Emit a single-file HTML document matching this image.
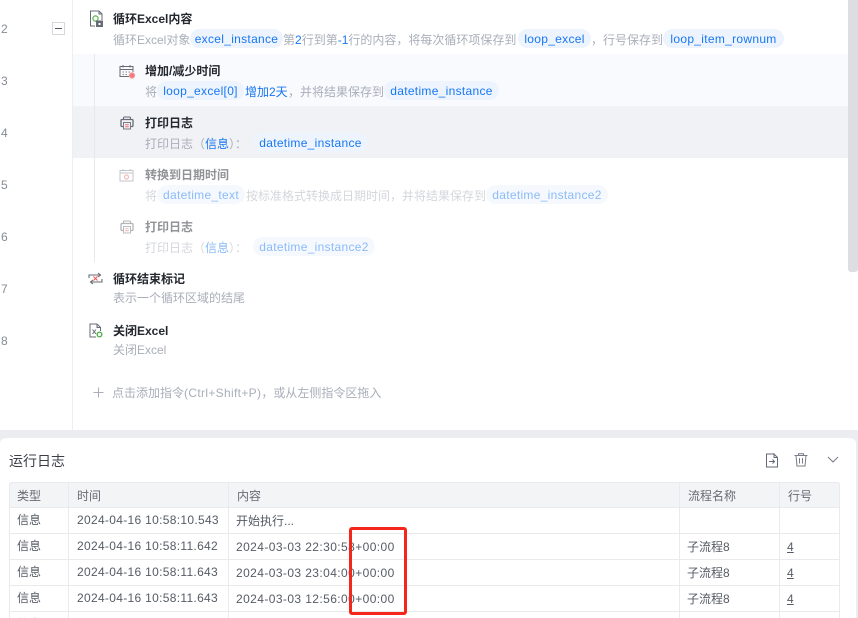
<!DOCTYPE html>
<html lang="zh-CN"><head><meta charset="utf-8">
<style>
html,body{margin:0;padding:0;width:858px;height:618px;overflow:hidden;background:#fff}
body{position:relative;font-family:"Liberation Sans","Noto Sans CJK SC",sans-serif;font-size:12px}
.a,.t,.d,.p,.n,.c{position:absolute;white-space:nowrap}
.a{display:block}
.t{font-weight:bold;color:#23272e;line-height:22px;height:20px}
.d{color:#a9aeb9;line-height:22px;height:20px}
.p{background:#edf4fe;color:#1877f2;border-radius:10px;height:19px;line-height:21px;text-align:center;letter-spacing:.3px}
.b{color:#1877f2}
.n{left:1px;color:#858b96;line-height:16px}
.c{color:#565b64;line-height:20px;height:20px}
.h{color:#666b75}
.tm{letter-spacing:.31px}
.ct{letter-spacing:.41px}
.v{position:absolute;width:1px;top:483px;height:135px;background:#e8eaee}
.r{position:absolute;left:9px;width:830px;height:1px;background:#e8eaee}
.off{opacity:.5}
svg{position:absolute;overflow:visible}
</style></head><body>

<div class="a" style="left:72px;top:0;width:1px;height:430px;background:#eceef1"></div>
<div class="a" style="left:73px;top:54px;width:775px;height:52px;background:#f8fafe"></div>
<div class="a" style="left:73px;top:106px;width:775px;height:52px;background:#f0f2f6"></div>
<div class="a" style="left:94px;top:54px;width:1px;height:208px;background:#e6e8ec"></div>
<div class="a" style="left:848px;top:0;width:10px;height:272px;background:#dcdee2;border-radius:0 0 3px 3px"></div>

<span class="n" style="top:21px">2</span>
<span class="n" style="top:73px">3</span>
<span class="n" style="top:125px">4</span>
<span class="n" style="top:177px">5</span>
<span class="n" style="top:229px">6</span>
<span class="n" style="top:281px">7</span>
<span class="n" style="top:333px">8</span>

<div class="a" style="left:52px;top:22px;width:11px;height:11px;border:1px solid #d6d8dc"></div>
<div class="a" style="left:55px;top:28px;width:7px;height:1px;background:#555a63"></div>

<!-- row 2 -->
<svg style="left:89px;top:10px" width="16" height="18" viewBox="0 0 16 18" fill="none"><path d="M10 1H1.5V16H6M10 1l3 3V10" stroke="#666b75"/><path d="M10 1V4H13" stroke="#666b75"/><circle cx="6.5" cy="8.5" r="2.6" stroke="#55b04c" stroke-width="1.2"/><rect x="7" y="10.5" width="7" height="6.5" fill="#666b75"/><rect x="9.5" y="13" width="2" height="2" fill="#fff"/></svg>
<span class="t" style="left:113px;top:8px">循环Excel内容</span>
<span class="d" style="left:113px;top:29px">循环Excel对象</span>
<span class="p" style="left:190px;top:29px;width:93px">excel_instance</span>
<span class="d" style="left:283px;top:29px">第<span class="b">2</span>行到第<span class="b">-1</span>行的内容，将每次循环项保存到</span>
<span class="p" style="left:518px;top:29px;width:73px">loop_excel</span>
<span class="d" style="left:591px;top:29px">，行号保存到</span>
<span class="p" style="left:663px;top:29px;width:121px">loop_item_rownum</span>

<!-- row 3 -->
<svg style="left:119px;top:64px" width="16" height="15" viewBox="0 0 16 15" fill="none"><path d="M10 12.5H1V2.5H14V8" stroke="#666b75"/><path d="M1 5.5H14M4 1V3.5M11 1V3.5" stroke="#666b75"/><path d="M3.5 8H5M6.5 8H8M9.5 8H11M3.5 10.5H5M6.5 10.5H8" stroke="#8a8f98"/><circle cx="13" cy="11.5" r="2.7" fill="#f27c7c" stroke="#f2a0a0"/></svg>
<span class="t" style="left:145px;top:60px">增加/减少时间</span>
<span class="d" style="left:145px;top:81px">将</span>
<span class="p" style="left:157px;top:81px;width:87px">loop_excel[0]</span>
<span class="d" style="left:245px;top:81px;color:#1877f2">增加2天</span>
<span class="d" style="left:288px;top:81px">，并将结果保存到</span>
<span class="p" style="left:384px;top:81px;width:115px">datetime_instance</span>

<!-- row 4 -->
<svg style="left:120px;top:116px" width="14" height="14" viewBox="0 0 14 14" fill="none"><path d="M3.5 3.5V2Q3.5 1 4.5 1H9.5Q10.5 1 10.5 2V3.5" stroke="#666b75" stroke-width="1.1"/><path d="M3 10.5H2Q1 10.5 1 9.5V4.5Q1 3.5 2 3.5H12Q13 3.5 13 4.5V9.5Q13 10.5 12 10.5H11" stroke="#666b75" stroke-width="1.3"/><rect x="3.5" y="6.5" width="7" height="6.5" stroke="#777c86" fill="#f0f2f6"/><path d="M5.2 8.7H8.8M5.2 10.7H8.8" stroke="#ec6a6a"/></svg>
<span class="t" style="left:145px;top:112px">打印日志</span>
<span class="d" style="left:145px;top:133px">打印日志（<span class="b">信息</span>）：</span>
<span class="p" style="left:253px;top:133px;width:115px">datetime_instance</span>

<!-- row 5 -->
<div class="off">
<svg style="left:119px;top:168px" width="15" height="14" viewBox="0 0 15 14" fill="none"><path d="M1 2.5H14V13H1Z" stroke="#888d96"/><path d="M1 5H14M4 1V3M11 1V3" stroke="#888d96"/><circle cx="7.5" cy="9" r="2" stroke="#ee7a7a" stroke-width="1.2"/></svg>
<span class="t" style="left:145px;top:164px">转换到日期时间</span>
<span class="d" style="left:145px;top:185px">将</span>
<span class="p" style="left:157px;top:185px;width:88px">datetime_text</span>
<span class="d" style="left:246px;top:185px">按标准格式转换成日期时间，并将结果保存到</span>
<span class="p" style="left:486px;top:185px;width:122px">datetime_instance2</span>

<!-- row 6 -->
<svg style="left:120px;top:220px" width="14" height="14" viewBox="0 0 14 14" fill="none"><path d="M3.5 3.5V2Q3.5 1 4.5 1H9.5Q10.5 1 10.5 2V3.5" stroke="#666b75" stroke-width="1.1"/><path d="M3 10.5H2Q1 10.5 1 9.5V4.5Q1 3.5 2 3.5H12Q13 3.5 13 4.5V9.5Q13 10.5 12 10.5H11" stroke="#666b75" stroke-width="1.3"/><rect x="3.5" y="6.5" width="7" height="6.5" stroke="#777c86" fill="#fff"/><path d="M5.2 8.7H8.8M5.2 10.7H8.8" stroke="#ec6a6a"/></svg>
<span class="t" style="left:145px;top:216px">打印日志</span>
<span class="d" style="left:145px;top:237px">打印日志（<span class="b">信息</span>）：</span>
<span class="p" style="left:253px;top:237px;width:122px">datetime_instance2</span>
</div>

<!-- row 7 -->
<svg style="left:88px;top:272px" width="15" height="13" viewBox="0 0 15 13" fill="none"><path d="M1 6V3H12M10 1l2.5 2L10 5M14 7V10H3M5 8l-2.5 2L5 12" stroke="#666b75" stroke-width="1.1"/><path d="M5.5 4.5L9.5 8.5M9.5 4.5L5.5 8.5" stroke="#ef5a5a" stroke-width="1.1"/></svg>
<span class="t" style="left:113px;top:268px">循环结束标记</span>
<span class="d" style="left:113px;top:287px">表示一个循环区域的结尾</span>

<!-- row 8 -->
<svg style="left:89px;top:323px" width="14" height="15" viewBox="0 0 14 15" fill="none"><path d="M8 1H1V14H7M8 1l3.5 3.5V8M8 1V4.5H11.5" stroke="#666b75"/><path d="M3.5 6.5L7 11M7 6.5L3.5 11" stroke="#666b75"/><circle cx="10.5" cy="11.5" r="2.3" stroke="#4fb14a" stroke-width="1.4"/></svg>
<span class="t" style="left:113px;top:320px">关闭Excel</span>
<span class="d" style="left:113px;top:339px">关闭Excel</span>

<!-- add -->
<svg style="left:93px;top:387px" width="11" height="11" viewBox="0 0 11 11"><path d="M5.5 0.5V10.5M0.5 5.5H10.5" stroke="#a9aeb9"/></svg>
<span class="d" style="left:112px;top:382px">点击添加指令<span style="letter-spacing:.33px">(Ctrl+Shift+P)</span>，或从左侧指令区拖入</span>

<!-- panel -->
<div class="a" style="left:0;top:430px;width:858px;height:188px;background:#ecedf1"></div>
<div class="a" style="left:0;top:438px;width:856px;height:180px;background:#fff;border-radius:6px 6px 0 0"></div>
<span class="a" style="position:absolute;left:9px;top:451px;font-size:14px;line-height:20px;color:#3a3e45;white-space:nowrap">运行日志</span>

<svg style="left:765px;top:453px" width="14" height="15" viewBox="0 0 14 15" fill="none"><path d="M9 1H1.5V14H12.5V4.5L9 1V4.5H12.5" stroke="#646a77"/><path d="M4 8.5H9.5M7.5 6.5L9.5 8.5L7.5 10.5" stroke="#646a77"/></svg>
<svg style="left:794px;top:453px" width="14" height="14" viewBox="0 0 14 14" fill="none"><path d="M0.5 2.5H13.5M4.5 2.5V0.8H9.5V2.5M2 2.5L3 13H11L12 2.5M5.5 5V10.5M8.5 5V10.5" stroke="#777c86"/></svg>
<svg style="left:827px;top:456px" width="12" height="7" viewBox="0 0 12 7" fill="none"><path d="M1 1L6 6L11 1" stroke="#777c86"/></svg>

<!-- table -->
<div class="a" style="left:9px;top:482px;width:829px;height:25px;background:#f3f4f6;border:1px solid #e8eaee;border-bottom:none;border-radius:3px 3px 0 0"></div>
<div class="v" style="left:9px"></div>
<div class="v" style="left:68px"></div>
<div class="v" style="left:228px"></div>
<div class="v" style="left:679px"></div>
<div class="v" style="left:779px"></div>
<div class="v" style="left:839px"></div>
<div class="r" style="top:507px"></div>
<div class="r" style="top:533px"></div>
<div class="r" style="top:559px"></div>
<div class="r" style="top:585px"></div>
<div class="r" style="top:611px"></div>

<span class="c h" style="left:17px;top:486px">类型</span>
<span class="c h" style="left:77px;top:486px">时间</span>
<span class="c h" style="left:237px;top:486px">内容</span>
<span class="c h" style="left:688px;top:486px">流程名称</span>
<span class="c h" style="left:788px;top:486px">行号</span>

<span class="c" style="left:17px;top:510px">信息</span>
<span class="c tm" style="left:77px;top:510px">2024-04-16 10:58:10.543</span>
<span class="c" style="left:236px;top:511px">开始执行...</span>

<span class="c" style="left:17px;top:536px">信息</span>
<span class="c tm" style="left:77px;top:536px">2024-04-16 10:58:11.642</span>
<span class="c ct" style="left:236px;top:537px">2024-03-03 22:30:58+00:00</span>
<span class="c" style="left:687px;top:537px">子流程8</span>
<span class="c" style="left:787px;top:537px;text-decoration:underline">4</span>

<span class="c" style="left:17px;top:562px">信息</span>
<span class="c tm" style="left:77px;top:562px">2024-04-16 10:58:11.643</span>
<span class="c ct" style="left:236px;top:563px">2024-03-03 23:04:00+00:00</span>
<span class="c" style="left:687px;top:563px">子流程8</span>
<span class="c" style="left:787px;top:563px;text-decoration:underline">4</span>

<span class="c" style="left:17px;top:588px">信息</span>
<span class="c tm" style="left:77px;top:588px">2024-04-16 10:58:11.643</span>
<span class="c ct" style="left:236px;top:589px">2024-03-03 12:56:00+00:00</span>
<span class="c" style="left:687px;top:589px">子流程8</span>
<span class="c" style="left:787px;top:589px;text-decoration:underline">4</span>

<span class="c" style="left:17px;top:614px">信息</span>

<div class="a" style="left:349px;top:527px;width:52px;height:82px;border:3px solid #f5261c;border-radius:3px;position:absolute"></div>

</body></html>
